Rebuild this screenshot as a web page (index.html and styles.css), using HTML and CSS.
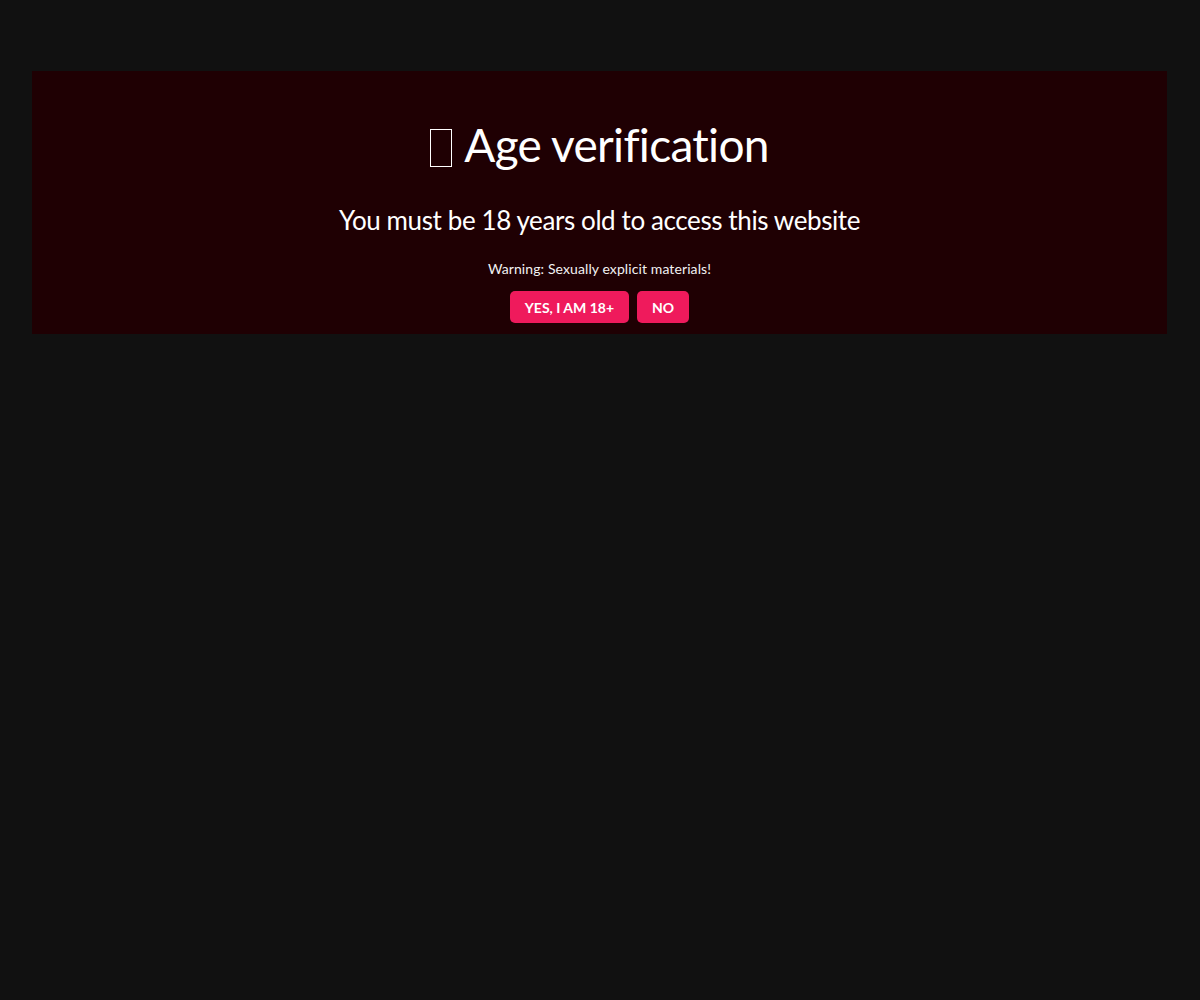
FILE: index.html
```html
<!DOCTYPE html>
<html lang="en">
<head>
<meta charset="utf-8">
<title>Age verification</title>
<link rel="stylesheet" href="styles.css">
</head>
<body>
<div class="page">
  <section class="age-box">
    <h1 class="title"><span class="tofu" aria-hidden="true"></span>Age verification</h1>
    <h2 class="subtitle">You must be 18 years old to access this website</h2>
    <p class="warning">Warning: Sexually explicit materials!</p>
    <div class="actions">
      <button class="btn">YES, I AM 18+</button>
      <button class="btn">NO</button>
    </div>
  </section>
</div>
</body>
</html>
```
FILE: styles.css
```css
html, body {
  margin: 0;
  padding: 0;
  background: #111111;
  height: 100%;
}
body {
  font-family: "Lato", "Liberation Sans", sans-serif;
  color: #ffffff;
  font-variant-ligatures: none;
}
.page {
  padding: 71px 33px 0 32px;
}
.age-box {
  background: #1f0003;
  height: 263px;
  box-sizing: border-box;
  display: flex;
  flex-direction: column;
  align-items: center;
  text-align: center;
}
.title {
  margin: 46px 0 0;
  font-size: 46px;
  font-weight: 400;
  line-height: 56px;
  letter-spacing: -0.7px;
  display: flex;
  align-items: center;
}
.tofu {
  display: inline-block;
  width: 22px;
  height: 38px;
  border: 1.5px solid #fff;
  box-sizing: border-box;
  margin-right: 12px;
  margin-top: 6px;
}
.subtitle {
  margin: 30px 0 0;
  font-size: 26px;
  font-weight: 400;
  line-height: 34px;
  letter-spacing: -0.4px;
}
.warning {
  margin: 23px 0 0;
  font-size: 14px;
  line-height: 18px;
  color: #f2f2f2;
  letter-spacing: 0.1px;
}
.actions {
  margin-top: 13px;
  display: flex;
  gap: 8px;
}
.btn {
  height: 32px;
  padding: 0 15px;
  border: none;
  border-radius: 5px;
  background: #ef1a5c;
  color: #fff;
  font-family: inherit;
  font-weight: 700;
  font-size: 14px;
}
```
